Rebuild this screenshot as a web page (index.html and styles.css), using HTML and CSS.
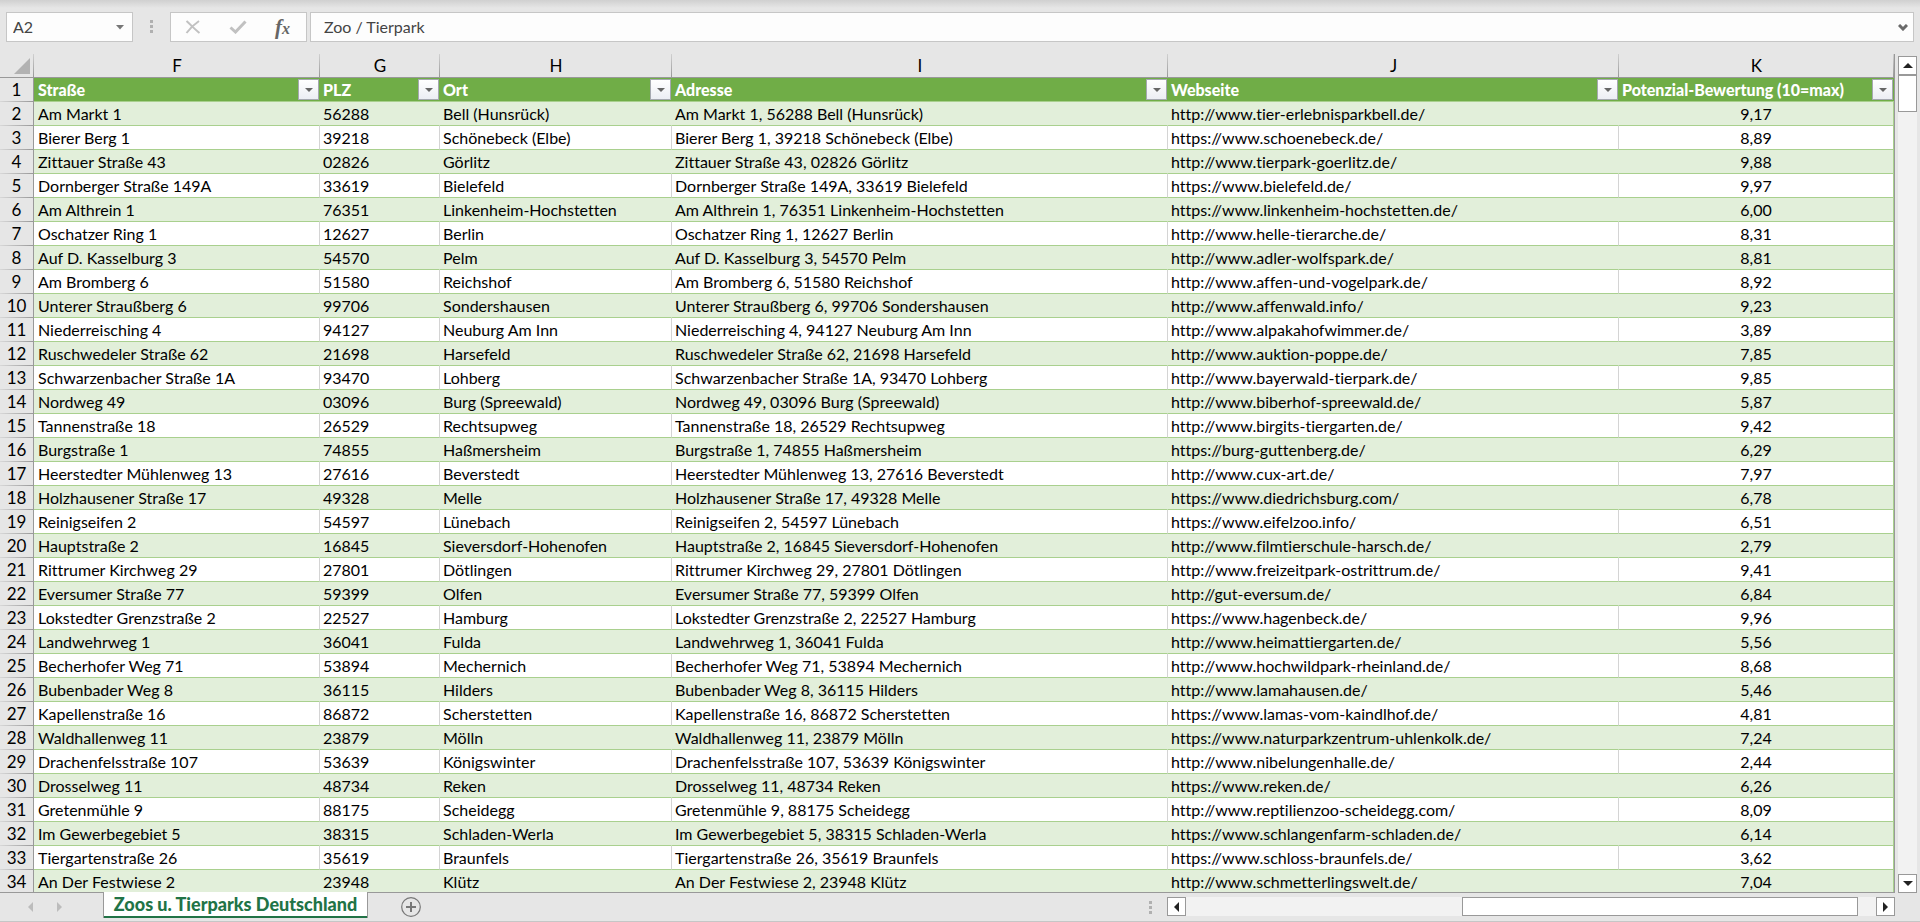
FILE: index.html
```html
<!DOCTYPE html>
<html lang="de">
<head>
<meta charset="utf-8">
<title>Zoos u. Tierparks Deutschland</title>
<link rel="stylesheet" href="styles.css">
</head>
<body>
<header class="formula-bar">
  <div class="box name-box">
    <input class="field" type="text" value="A2" aria-label="Namenfeld">
    <button class="plain" type="button" aria-label="Namen anzeigen"><svg width="8" height="5" viewBox="0 0 8 5"><path d="M0 0h8L4 4.500z" fill="#777"/></svg></button>
  </div>
  <span class="grip"></span>
  <div class="box tools">
    <button class="plain" type="button" aria-label="Abbrechen"><svg width="16" height="14" viewBox="0 0 16 14"><path d="M1.500 1C5 4 10 9.500 14.500 13M14 1C9.500 4 5 8.500 1.500 13" fill="none" stroke="#c1c1c1" stroke-width="2"/></svg></button>
    <button class="plain" type="button" aria-label="Eingeben"><svg width="18" height="14" viewBox="0 0 18 14"><path d="M1.500 7.500L6.500 12L16.500 1.500" fill="none" stroke="#c1c1c1" stroke-width="3"/></svg></button>
    <button class="plain fx" type="button" aria-label="Funktion einfügen"><span class="fx-f">f</span><span class="fx-x">x</span></button>
  </div>
  <div class="box formula">
    <input class="field" type="text" value="Zoo / Tierpark" aria-label="Bearbeitungsleiste">
    <button class="plain" type="button" aria-label="Bearbeitungsleiste erweitern"><svg width="10" height="7" viewBox="0 0 10 7"><path d="M1 1l4 4 4-4" fill="none" stroke="#6a6a6a" stroke-width="3"/></svg></button>
  </div>
</header>

<main class="workspace">
  <div class="grid">
    <table class="sheet">
      <colgroup>
        <col class="c-num"><col class="c-f"><col class="c-g"><col class="c-h"><col class="c-i"><col class="c-j"><col class="c-k">
      </colgroup>
      <thead>
        <tr class="letters">
          <th class="corner"><svg width="16" height="16" viewBox="0 0 16 16"><path d="M16 0v16H0z" fill="#b2b2b2"/></svg></th>
          <th>F</th><th>G</th><th>H</th><th>I</th><th>J</th><th>K</th>
        </tr>
      </thead>
      <tbody id="rows"></tbody>
    </table>
  </div>
  <div class="vscroll">
    <button class="scroll-btn" type="button" aria-label="Nach oben"><svg width="10" height="5" viewBox="0 0 10 5"><path d="M5 0l5 5H0z" fill="#222"/></svg></button>
    <div class="vtrack"><div class="vthumb"></div></div>
    <button class="scroll-btn" type="button" aria-label="Nach unten"><svg width="10" height="5" viewBox="0 0 10 5"><path d="M0 0h10L5 5z" fill="#222"/></svg></button>
  </div>
</main>

<footer class="tab-bar">
  <div class="tab-nav">
    <button class="plain" type="button" aria-label="Vorheriges Blatt"><svg width="5" height="10" viewBox="0 0 5 10"><path d="M5 0v10L0 5z" fill="#bcbcbc"/></svg></button>
    <button class="plain" type="button" aria-label="Nächstes Blatt"><svg width="5" height="10" viewBox="0 0 5 10"><path d="M0 0v10l5-5z" fill="#bcbcbc"/></svg></button>
  </div>
  <button class="tab" type="button">Zoos u. Tierparks Deutschland</button>
  <button class="plain add" type="button" aria-label="Neues Blatt"><svg width="20" height="20" viewBox="0 0 20 20"><circle cx="10" cy="10" r="9.300" fill="none" stroke="#777" stroke-width="1.200"/><path d="M10 5v10M5 10h10" stroke="#777" stroke-width="2"/></svg></button>
  <span class="grip bottom-grip"></span>
  <div class="hscroll">
    <button class="scroll-btn" type="button" aria-label="Nach links"><svg width="5" height="10" viewBox="0 0 5 10"><path d="M5 0v10L0 5z" fill="#222"/></svg></button>
    <div class="htrack"><div class="hthumb"></div></div>
    <button class="scroll-btn" type="button" aria-label="Nach rechts"><svg width="5" height="10" viewBox="0 0 5 10"><path d="M0 0v10l5-5z" fill="#222"/></svg></button>
  </div>
</footer>
<script src="sheet.js"></script>
</body>
</html>
```

FILE: styles.css
```css
* { box-sizing: border-box; }

body {
  margin: 0;
  height: 100vh;
  display: flex;
  flex-direction: column;
  overflow: hidden;
  background: #e6e6e6;
  font: 16px/22px Lato, "Liberation Sans", sans-serif;
  font-variant-ligatures: none;
  color: #000;
}

button, input { font: inherit; font-variant-ligatures: none; color: inherit; margin: 0; }
svg { display: block; }

.plain {
  border: 0;
  padding: 0;
  background: none;
  display: flex;
  align-items: center;
  justify-content: center;
}

/* Formula bar */
.formula-bar {
  display: flex;
  flex: none;
  height: 54px;
  padding: 12px 6px 12px 6px;
  background: linear-gradient(#d0d0d0, #e6e6e6 8px);
}
.box {
  display: flex;
  align-items: center;
  height: 30px;
  background: #fdfdfd;
  border: 1px solid #c6c6c6;
}
.field {
  flex: 1;
  min-width: 0;
  border: 0;
  padding: 0;
  background: none;
  outline: 0;
  color: #444;
}
.name-box { width: 127px; padding: 0 8px 0 6px; }
.grip {
  width: 3px;
  height: 13px;
  background: repeating-linear-gradient(#b0b0b0 0 3px, transparent 3px 5px);
}
.formula-bar .grip { margin: 8px 17px; }
.tools { width: 137px; margin-right: 3px; padding: 0 16px 0 14px; justify-content: space-between; }
.fx { font: italic bold 21px/24px "Liberation Serif", serif; color: #666; }
.fx-x { font-size: 16px; padding-top: 4px; }
.formula { flex: 1; padding: 0 5px 0 13px; }

/* Grid */
.workspace { flex: 1; display: flex; min-height: 0; }
.grid {
  flex: 1;
  min-width: 0;
  overflow: hidden;
  border-right: 1px solid #999;
  border-bottom: 1px solid #999;
}
.sheet {
  width: 100%;
  table-layout: fixed;
  border-collapse: separate;
  border-spacing: 0;
  background: #fff;
}
.c-num { width: 34px; }
.c-f { width: 286px; }
.c-g { width: 120px; }
.c-h { width: 232px; }
.c-j { width: 451px; }
.c-k { width: 275px; }
.sheet th, .sheet td {
  height: 24px;
  padding: 0 3px;
  line-height: 22px;
  text-align: left;
  white-space: nowrap;
  overflow: hidden;
}
.sheet .letters th {
  padding: 0;
  font-size: 17px;
  font-weight: 400;
  text-align: center;
  border-bottom: 1px solid #999;
  background: linear-gradient(#d0d0d0, #999) right / 1px 100% no-repeat #e6e6e6;
}
.sheet .letters .corner { padding: 4px 4px 3px 14px; }
.sheet .num {
  padding: 0;
  font-size: 17px;
  font-weight: 400;
  text-align: center;
  border-right: 1px solid #999;
  background: linear-gradient(90deg, #d8d8d8, #999) bottom / 100% 1px no-repeat #e6e6e6;
}
.sheet td { border-bottom: 1px solid #a9d08e; border-right: 1px solid #d4d4d4; }
.band td { background: #e2efda; border-right-color: #e2efda; }
.sheet td:last-child { text-align: center; border-right-color: #a9d08e; }
.sheet .head {
  padding: 0 1px 0 3px;
  color: #fff;
  font-weight: 900;
  background: #70ad47;
  border-bottom: 1px solid #a9d08e;
}
.sheet .num + .head, .sheet .num + td { padding-left: 4px; }
.head-cell { display: flex; justify-content: space-between; align-items: center; }
.filter {
  width: 21px;
  height: 21px;
  padding: 0;
  display: flex;
  flex: none;
  align-items: center;
  justify-content: center;
  border: 1px solid #a5a8b0;
  background: linear-gradient(#fff, #eceef4);
}

/* Scroll bars */
.vscroll {
  width: 25px;
  display: flex;
  flex-direction: column;
  align-items: center;
  padding-top: 2px;
}
.scroll-btn {
  width: 19px;
  height: 19px;
  padding: 0;
  flex: none;
  display: flex;
  align-items: center;
  justify-content: center;
  background: #fff;
  border: 1px solid #999;
}
.vtrack { flex: 1; width: 19px; background: #f2f2f2; }
.vthumb { height: 37px; background: #fff; border: 1px solid #999; }

/* Sheet tabs */
.tab-bar {
  flex: none;
  display: flex;
  height: 29px;
  padding-right: 25px;
  border-bottom: 1px solid #c6c6c6;
}
.tab-nav { display: flex; width: 103px; gap: 24px; padding-left: 28px; }
.tab {
  position: relative;
  width: 265px;
  height: 26px;
  margin-top: -1px;
  padding: 0 0 3px;
  border: solid #999;
  border-width: 0 1px;
  box-shadow: inset 0 -2px #217346;
  background: #fff;
  color: #217346;
  font-size: 18px;
  font-weight: 900;
  line-height: 22px;
  white-space: nowrap;
}
.add { margin-left: 33px; }
.bottom-grip { margin: 8px 15px 0 auto; }
.hscroll { display: flex; width: 39%; max-width: 728px; padding-top: 4px; }
.htrack { flex: 1; height: 19px; display: flex; justify-content: flex-end; padding-right: 18px; background: #f2f2f2; }
.hthumb { width: 59%; background: #fff; border: 1px solid #999; }
```

FILE: sheet.js
```js
const headings = ["Straße", "PLZ", "Ort", "Adresse", "Webseite", "Potenzial-Bewertung (10=max)"];

const data = `Am Markt 1|56288|Bell (Hunsrück)|http://www.tier-erlebnisparkbell.de/|9,17
Bierer Berg 1|39218|Schönebeck (Elbe)|https://www.schoenebeck.de/|8,89
Zittauer Straße 43|02826|Görlitz|http://www.tierpark-goerlitz.de/|9,88
Dornberger Straße 149A|33619|Bielefeld|https://www.bielefeld.de/|9,97
Am Althrein 1|76351|Linkenheim-Hochstetten|https://www.linkenheim-hochstetten.de/|6,00
Oschatzer Ring 1|12627|Berlin|http://www.helle-tierarche.de/|8,31
Auf D. Kasselburg 3|54570|Pelm|http://www.adler-wolfspark.de/|8,81
Am Bromberg 6|51580|Reichshof|http://www.affen-und-vogelpark.de/|8,92
Unterer Straußberg 6|99706|Sondershausen|http://www.affenwald.info/|9,23
Niederreisching 4|94127|Neuburg Am Inn|http://www.alpakahofwimmer.de/|3,89
Ruschwedeler Straße 62|21698|Harsefeld|http://www.auktion-poppe.de/|7,85
Schwarzenbacher Straße 1A|93470|Lohberg|http://www.bayerwald-tierpark.de/|9,85
Nordweg 49|03096|Burg (Spreewald)|http://www.biberhof-spreewald.de/|5,87
Tannenstraße 18|26529|Rechtsupweg|http://www.birgits-tiergarten.de/|9,42
Burgstraße 1|74855|Haßmersheim|https://burg-guttenberg.de/|6,29
Heerstedter Mühlenweg 13|27616|Beverstedt|http://www.cux-art.de/|7,97
Holzhausener Straße 17|49328|Melle|https://www.diedrichsburg.com/|6,78
Reinigseifen 2|54597|Lünebach|https://www.eifelzoo.info/|6,51
Hauptstraße 2|16845|Sieversdorf-Hohenofen|http://www.filmtierschule-harsch.de/|2,79
Rittrumer Kirchweg 29|27801|Dötlingen|http://www.freizeitpark-ostrittrum.de/|9,41
Eversumer Straße 77|59399|Olfen|http://gut-eversum.de/|6,84
Lokstedter Grenzstraße 2|22527|Hamburg|https://www.hagenbeck.de/|9,96
Landwehrweg 1|36041|Fulda|http://www.heimattiergarten.de/|5,56
Becherhofer Weg 71|53894|Mechernich|http://www.hochwildpark-rheinland.de/|8,68
Bubenbader Weg 8|36115|Hilders|http://www.lamahausen.de/|5,46
Kapellenstraße 16|86872|Scherstetten|https://www.lamas-vom-kaindlhof.de/|4,81
Waldhallenweg 11|23879|Mölln|https://www.naturparkzentrum-uhlenkolk.de/|7,24
Drachenfelsstraße 107|53639|Königswinter|http://www.nibelungenhalle.de/|2,44
Drosselweg 11|48734|Reken|https://www.reken.de/|6,26
Gretenmühle 9|88175|Scheidegg|http://www.reptilienzoo-scheidegg.com/|8,09
Im Gewerbegebiet 5|38315|Schladen-Werla|https://www.schlangenfarm-schladen.de/|6,14
Tiergartenstraße 26|35619|Braunfels|https://www.schloss-braunfels.de/|3,62
An Der Festwiese 2|23948|Klütz|http://www.schmetterlingswelt.de/|7,04`;

const arrow = '<svg width="8" height="4" viewBox="0 0 8 4"><path d="M0 0h8L4 4z" fill="#666"/></svg>';

const headRow = '<tr><th class="num">1</th>' + headings.map(h =>
  `<th class="head"><div class="head-cell"><span>${h}</span><button class="filter" type="button" aria-label="${h} filtern">${arrow}</button></div></th>`
).join("") + "</tr>";

const bodyRows = data.split("\n").map((line, i) => {
  const [street, zip, town, site, score] = line.split("|");
  const cells = [street, zip, town, `${street}, ${zip} ${town}`, site, score];
  return `<tr class="${i % 2 ? "" : "band"}"><th class="num">${i + 2}</th>` +
    cells.map(c => `<td>${c}</td>`).join("") + "</tr>";
}).join("");

document.getElementById("rows").innerHTML = headRow + bodyRows;
```
